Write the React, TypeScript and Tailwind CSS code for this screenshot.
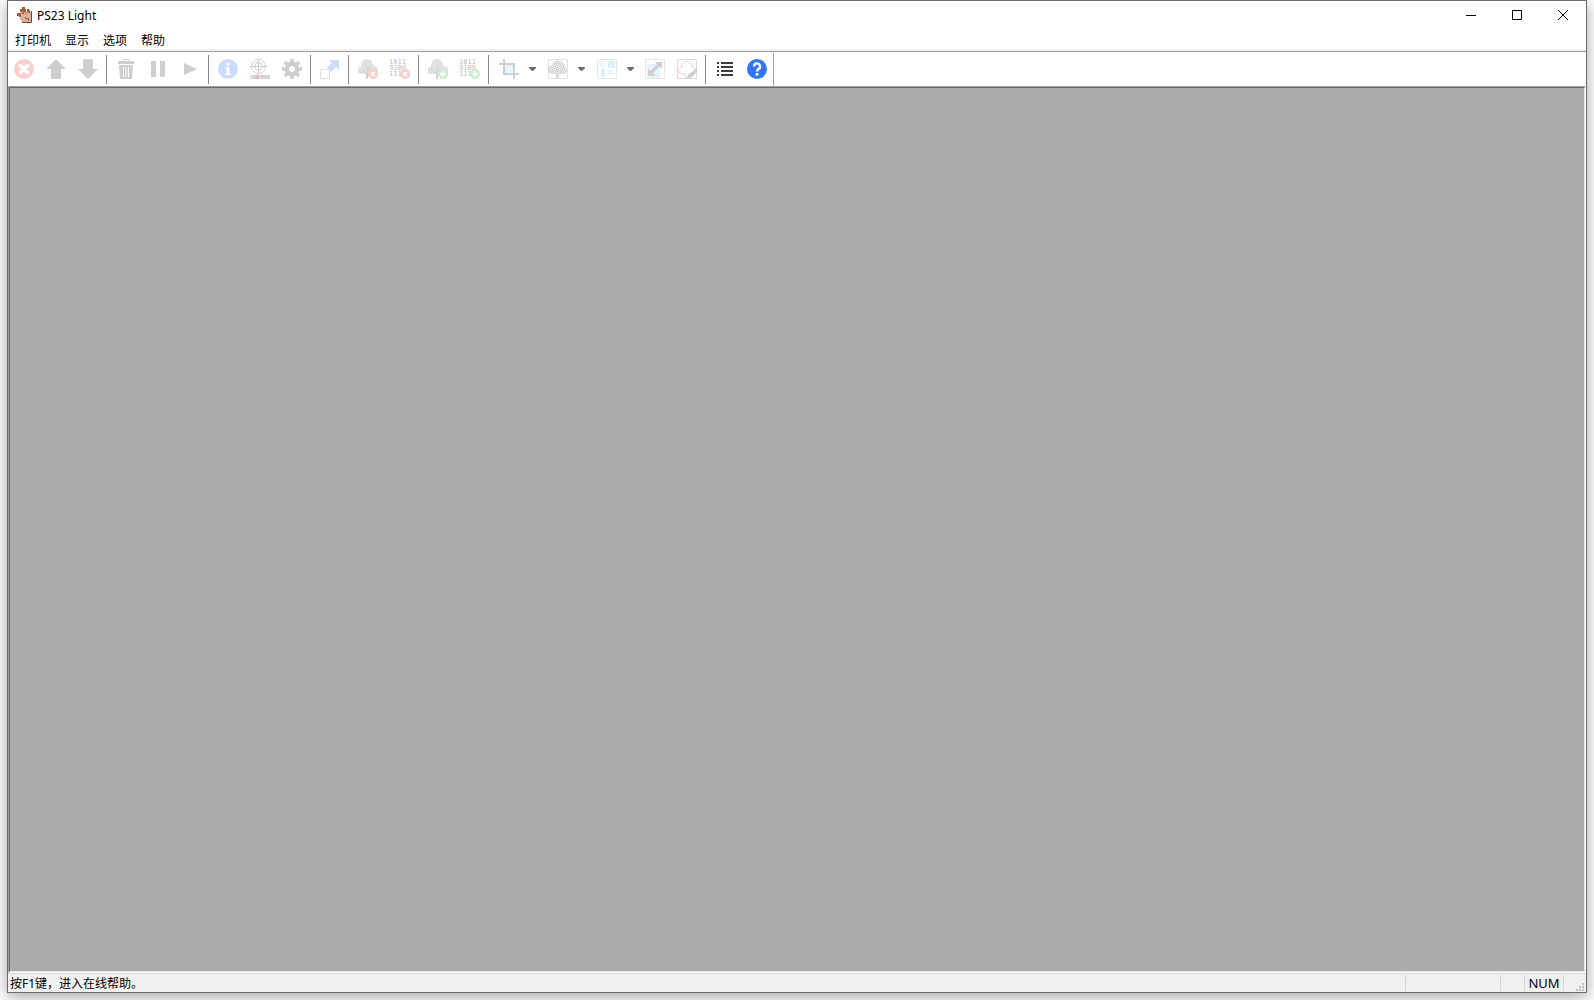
import { useState } from "react";
import type { ReactNode } from "react";

const MENUS = ["打印机", "显示", "选项", "帮助"];

function Icon({ children }: { children: ReactNode }) {
  return (
    <svg className="size-5 shrink-0" viewBox="0 0 20 20" fill="none" aria-hidden="true">
      {children}
    </svg>
  );
}

// Small red / green badge in the corner of the remove and add icons
function Badge({ kind }: { kind: "remove" | "add" }) {
  return (
    <>
      <circle cx="15" cy="15" r="5" fill={kind === "remove" ? "#f9cdcb" : "#c9edcf"} />
      <path
        d={kind === "remove" ? "M13 13l4 4M17 13l-4 4" : "M15 12v6M12 15h6"}
        stroke="#fff"
        strokeWidth="1.6"
      />
    </>
  );
}

function TreeIcon({ kind }: { kind: "remove" | "add" }) {
  return (
    <Icon>
      <path
        d="M3 15a3.500 3.500 0 0 1 0-7a6 6 0 0 1 1-4.500a5.500 5.500 0 0 1 10.500 1a4 4 0 0 1 1 3a3.800 3.800 0 0 1 2 7.500z"
        fill="#e0e0e0"
      />
      <path d="M9 7v13M9 15l-4-3M9 12l3-2" stroke="#d2d2d2" />
      <path d="M8 14h2v6H8z" fill="#d2d2d2" />
      <Badge kind={kind} />
    </Icon>
  );
}

function BinaryIcon({ kind }: { kind: "remove" | "add" }) {
  return (
    <Icon>
      <g fill="#bcbcbc" fontFamily="DejaVu Sans Mono, monospace" fontSize="7">
        <text x="-1" y="5">1011</text>
        <text x="-1" y="11">0100</text>
        <text x="-1" y="17">111</text>
      </g>
      <Badge kind={kind} />
    </Icon>
  );
}

const ICONS: Record<string, ReactNode> = {
  cancel: (
    <Icon>
      <circle cx="10" cy="10" r="10" fill="#f9cfce" />
      <path d="M5.500 5.500l9 9M14.500 5.500l-9 9" stroke="#fff" strokeWidth="3.400" />
    </Icon>
  ),
  up: (
    <Icon>
      <path d="M10 0l10 10h-5v10H5V10H0z" fill="#cecece" />
    </Icon>
  ),
  down: (
    <Icon>
      <path d="M10 20l10-10h-5V0H5v10H0z" fill="#cecece" />
    </Icon>
  ),
  trash: (
    <Icon>
      <path d="M7 2V.5h6V2" stroke="#cecece" />
      <path d="M2 2h16v3H2zM3 6h14l-1 14H4z" fill="#cecece" />
      <path d="M7.500 8v10M10 8v10M12.500 8v10" stroke="#fff" />
    </Icon>
  ),
  pause: (
    <Icon>
      <path d="M3 2h5v16H3zM12 2h5v16h-5z" fill="#cecece" />
    </Icon>
  ),
  play: (
    <Icon>
      <path d="M4 4l13 6l-13 6z" fill="#cecece" />
    </Icon>
  ),
  info: (
    <Icon>
      <circle cx="10" cy="10" r="10" fill="#cbdcfb" />
      <circle cx="10" cy="5.200" r="1.700" fill="#fff" />
      <path d="M7.500 8h4v6.500H13V16H7.500v-1.500h1v-5h-1z" fill="#fff" />
    </Icon>
  ),
  register: (
    <Icon>
      <circle cx="8.500" cy="7.500" r="7" stroke="#cecece" />
      <circle cx="8.500" cy="7.500" r="4" stroke="#cecece" />
      <path d="M8.500 0v15M0 7.500h17" stroke="#cecece" />
      <path d="M0 16h3v4H0z" fill="#efd8cf" />
      <path d="M3 16h2v4H3z" fill="#bfdcf5" />
      <path d="M5 16h2v4H5z" fill="#f6b6c3" />
      <path d="M7 16h2v4H7z" fill="#bcbff5" />
      <path d="M9 16h2v4H9z" fill="#f3e49b" />
      <path d="M11 16h2v4h-2z" fill="#d9c5e6" />
      <path d="M13 16h7v4h-7z" fill="#dadada" />
      <path d="M15.500 16v4M18.500 16v4" stroke="#c6c6c6" />
    </Icon>
  ),
  settings: (
    <Icon>
      <circle cx="10" cy="10" r="5.200" stroke="#cecece" strokeWidth="4.400" />
      <path
        d="M10 0v4M10 16v4M0 10h4M16 10h4M3 3l3 3M14 14l3 3M17 3l-3 3M6 14l-3 3"
        stroke="#cecece"
        strokeWidth="3.600"
      />
    </Icon>
  ),
  expand: (
    <Icon>
      <path d="M.5 10.500h9v9h-9z" stroke="#e0e0e0" />
      <path d="M9 1h10v10l-3-3l-5 5l-4-4l5-5z" fill="#cbdcfb" />
    </Icon>
  ),
  treeRemove: <TreeIcon kind="remove" />,
  binaryRemove: <BinaryIcon kind="remove" />,
  treeAdd: <TreeIcon kind="add" />,
  binaryAdd: <BinaryIcon kind="add" />,
  crop: (
    <Icon>
      <path d="M6 6h8v8H6z" fill="#e6f4fd" />
      <path d="M5 0v15h15M0 5h15v15" stroke="#cecece" strokeWidth="2" />
    </Icon>
  ),
  treeGrid: (
    <Icon>
      <path
        d="M3 15a4 4 0 0 1-2-6a4 4 0 0 1 3-3a6 5.500 0 0 1 11.500-1a4.500 4.500 0 0 1 2.500 4a4 4 0 0 1-1 6h-6v4H8v-4z"
        fill="#dedede"
      />
      <path d="M.5.5h19v19H.5z" stroke="#e2e2e2" />
      <path d="M9.500 0v20M0 10.500h20" stroke="#fff" />
      <path d="M9.500 0v20M0 10.500h20" stroke="#c0c0c0" strokeDasharray="1 1" />
    </Icon>
  ),
  nesting: (
    <Icon>
      <path d="M.5.5h19v19H.5z" stroke="#e6e6e6" />
      <path d="M2 2h6v6H2zM11 11h5v5h-5z" fill="#e9f6fe" />
      <path d="M11 2h7v7h-7zM4 10h4v8H4z" fill="#d9f0fd" />
    </Icon>
  ),
  resize: (
    <Icon>
      <path d="M2 5h13v14H2z" fill="#e6f4fd" />
      <path d="M.5.5h19v19H.5z" stroke="#d8d8d8" strokeDasharray="2 1" />
      <path d="M10 3h7v7l-2.500-2.500l-6.500 6.500l2.500 3H3V9.500l2.500 2.500l6.500-6.500z" fill="#cecece" />
    </Icon>
  ),
  contour: (
    <Icon>
      <path d="M.5.5h19v19H.5z" stroke="#dcdcdc" />
      <path
        d="M8.500 18.500V15H4a3.500 3.500 0 0 1-1-6.500h2a5 5 0 0 1 9-4a4 4 0 0 1 1 3a3.500 3.500 0 0 1 2 6L11 16v2.500z"
        stroke="#f8cfcc"
      />
      <path d="M20 9v4l-6 6h-3v-3z" fill="#cecece" />
    </Icon>
  ),
  list: (
    <Icon>
      <path
        d="M2 4h2M2 8h2M2 12h2M2 16h2M6 4h12M6 8h12M6 12h12M6 16h12"
        stroke="#3c3c3c"
        strokeWidth="2"
      />
    </Icon>
  ),
  help: (
    <Icon>
      <circle cx="10" cy="10" r="10" fill="#2f76f0" />
      <path d="M7 7.500a3 3 0 1 1 4.500 2.500c-1 .7-1.500 1-1.500 2.500" stroke="#fff" strokeWidth="2.400" />
      <circle cx="10" cy="15.300" r="1.500" fill="#fff" />
    </Icon>
  ),
};

type Tool = { id: string; label: string; enabled?: boolean; dropdown?: boolean };

const TOOL_GROUPS: Tool[][] = [
  [
    { id: "cancel", label: "取消" },
    { id: "up", label: "上移" },
    { id: "down", label: "下移" },
  ],
  [
    { id: "trash", label: "删除" },
    { id: "pause", label: "暂停" },
    { id: "play", label: "开始" },
  ],
  [
    { id: "info", label: "信息" },
    { id: "register", label: "校准" },
    { id: "settings", label: "设置" },
  ],
  [{ id: "expand", label: "展开" }],
  [
    { id: "treeRemove", label: "移除图像" },
    { id: "binaryRemove", label: "移除数据" },
  ],
  [
    { id: "treeAdd", label: "添加图像" },
    { id: "binaryAdd", label: "添加数据" },
  ],
  [
    { id: "crop", label: "裁剪", dropdown: true },
    { id: "treeGrid", label: "分割", dropdown: true },
    { id: "nesting", label: "排版", dropdown: true },
    { id: "resize", label: "缩放" },
    { id: "contour", label: "轮廓" },
  ],
  [
    { id: "list", label: "列表", enabled: true },
    { id: "help", label: "帮助", enabled: true },
  ],
];

function ToolButton({ tool }: { tool: Tool }) {
  return (
    <button
      type="button"
      title={tool.label}
      aria-label={tool.label}
      disabled={!tool.enabled}
      className={
        tool.dropdown
          ? "flex h-8 w-[49px] items-center gap-[10px] pl-[7px]"
          : "flex h-8 w-8 items-center justify-center enabled:hover:bg-[#e5f3ff]"
      }
    >
      {ICONS[tool.id]}
      {tool.dropdown && (
        <svg className="h-1 w-[7px]" viewBox="0 0 7 4" aria-hidden="true">
          <path d="M0 0h7v1L4 4H3L0 1z" fill="#6b6b6b" />
        </svg>
      )}
    </button>
  );
}

function AppLogo() {
  return (
    <svg className="size-4" viewBox="0 0 16 16" fill="none" aria-hidden="true">
      <path d="M4 6l2-1h8v10H5l-2-3z" fill="#d9b09c" />
      <path d="M14.500 4v11.500H5" stroke="#7d4429" />
      <path d="M5 0h3v2h1v3H7v2H5V5H3V2h2zM0 6h4v4H2V9H0zM10 2h2v1h1v3h-2V5h-1z" fill="#a85a38" />
      <path d="M4 4h2v2H4zM8 5h2v2H8z" fill="#c98c70" />
      <path d="M8.500 10v1.500h3V14" stroke="#a85a38" />
    </svg>
  );
}

const CAPTION_BUTTONS = [
  { label: "最小化", path: "M0 5.500h10" },
  { label: "最大化", path: "M.5.5h9v9h-9z" },
  { label: "关闭", path: "M0 0l10 10M10 0L0 10" },
];

export default function App() {
  const [openMenu, setOpenMenu] = useState("");

  return (
    <div className="min-h-screen flex flex-col overflow-hidden bg-white px-[7px] pb-[7px] text-xs text-black font-['Noto_Sans','Noto_Sans_CJK_SC',sans-serif]">
      <div className="flex flex-1 flex-col border border-[#6b6b6b] bg-white shadow-[0_4px_16px_rgba(0,0,0,0.35)]">
        {/* Title bar */}
        <header className="flex h-7 items-center justify-between">
          <div className="flex items-center gap-1 pl-[9px]">
            <AppLogo />
            <h1 className="leading-4 pt-[2px]">PS23 Light</h1>
          </div>
          <div className="flex h-full">
            {CAPTION_BUTTONS.map((button) => (
              <button
                key={button.label}
                type="button"
                aria-label={button.label}
                className="flex w-[46px] items-center justify-center hover:bg-gray-200"
              >
                <svg className="size-[10px]" viewBox="0 0 10 10" fill="none" stroke="#000">
                  <path d={button.path} />
                </svg>
              </button>
            ))}
          </div>
        </header>

        {/* Menu bar */}
        <nav className="flex h-[22px] items-end border-b-2 border-[#f0f0f0]">
          {MENUS.map((menu) => (
            <button
              key={menu}
              type="button"
              onClick={() => setOpenMenu(openMenu === menu ? "" : menu)}
              className={`px-[7px] leading-4 hover:bg-[#e5f3ff] ${openMenu === menu ? "bg-[#cce8ff]" : ""}`}
            >
              {menu}
            </button>
          ))}
        </nav>

        {/* Toolbar */}
        <div role="toolbar" className="flex h-[35px] items-stretch border-t border-[#a0a0a0]">
          {TOOL_GROUPS.map((group, index) => (
            <div key={group[0].id} className="flex items-center">
              {index > 0 && <span className="mr-[3px] ml-[2px] h-[29px] w-px bg-[#868686]" />}
              {group.map((tool) => (
                <ToolButton key={tool.id} tool={tool} />
              ))}
            </div>
          ))}
          <span className="mt-px w-px bg-[#a0a0a0]" />
        </div>

        {/* Document area */}
        <main className="flex flex-1 flex-col border border-t-[#a0a0a0] border-l-[#a0a0a0] border-r-white border-b-white">
          <div className="flex-1 border border-t-[#696969] border-l-[#696969] border-r-[#e3e3e3] border-b-[#e3e3e3] bg-[#ababab]" />
        </main>

        {/* Status bar */}
        <footer className="flex h-[19px] items-stretch border-t border-[#d7d7d7] bg-[#f0f0f0] leading-5">
          <p className="h-[18px] flex-1 pl-[2px]">按F1键，进入在线帮助。</p>
          <span className="my-px w-[95px] border-l border-[#d7d7d7]" />
          <span className="my-px w-6 border-l border-[#d7d7d7]" />
          <span className="my-px h-4 w-[39px] border-l border-[#d7d7d7] text-center text-[13px] leading-4">
            NUM
          </span>
          <span className="my-px flex w-[23px] items-end justify-end border-l border-[#d7d7d7] pr-[2px]">
            <svg className="size-2" viewBox="0 0 8 8" fill="#bfbfbf" aria-hidden="true">
              <path d="M6 0h2v2H6zM3 3h2v2H3zM6 3h2v2H6zM0 6h2v2H0zM3 6h2v2H3zM6 6h2v2H6z" />
            </svg>
          </span>
        </footer>
      </div>
    </div>
  );
}
